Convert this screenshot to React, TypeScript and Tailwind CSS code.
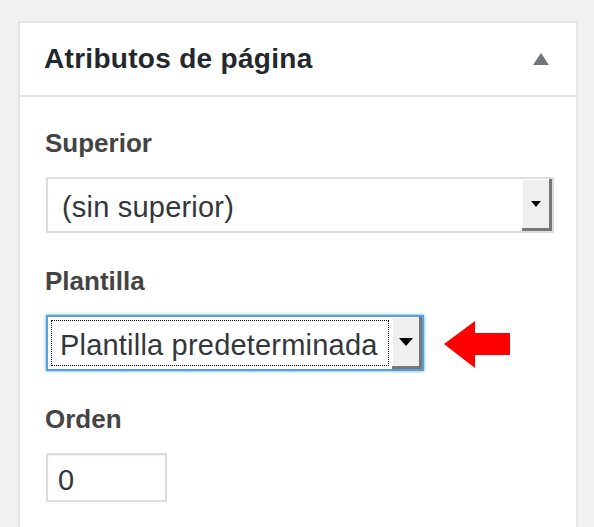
const font = { fontFamily: '"Liberation Sans", Arial, sans-serif' };

const SelectButton = ({ big }: { big?: boolean }) => (
  <div className="w-[30px] h-full bg-[#efefef] shadow-[inset_-3px_-3px_0_#777,inset_1px_1px_0_#fff] flex items-center justify-center pr-[3px] pb-[3px]">
    <div
      className={
        big
          ? "w-0 h-0 border-l-[7px] border-r-[7px] border-t-[8px] border-l-transparent border-r-transparent border-t-black"
          : "w-0 h-0 border-l-[5px] border-r-[5px] border-t-[6px] border-l-transparent border-r-transparent border-t-black"
      }
    />
  </div>
);

const App = () => {
  return (
    <div className="w-[594px] h-[527px] overflow-hidden bg-[#f1f1f1] pt-[21px] pl-[18px]" style={font}>
      <div className="w-[560px] h-[520px] bg-white border-2 border-[#e5e5e5]">
        <div className="h-[74px] border-b-2 border-[#e5e5e5] flex items-center justify-between pl-[24px] pr-[27px]">
          <h2 className="text-[28px] leading-[32px] font-bold tracking-[0.3px] text-[#23282d]">Atributos de página</h2>
          <div className="w-0 h-0 border-l-[8px] border-r-[8px] border-b-[12px] border-l-transparent border-r-transparent border-b-[#72777c]" />
        </div>

        <div className="pl-[26px] pt-[31px]">
          <p className="text-[26px] leading-[30px] font-bold text-[#444] mb-[19px] -ml-[1px]">Superior</p>
          <div className="w-[508px] h-[56px] border-2 border-[#ddd] flex">
            <div className="flex-1 flex items-center pl-[14px] pt-1 text-[29px] leading-[32px] tracking-[0.2px] text-[#32373c]">
              (sin superior)
            </div>
            <SelectButton />
          </div>

          <p className="text-[26px] leading-[30px] font-bold text-[#444] mt-[33px] mb-[19px] -ml-[1px]">Plantilla</p>
          <div className="flex items-center gap-[20px]">
            <div className="w-[378px] h-[56px] border-2 border-[#5b9dd9] shadow-[0_0_3px_rgba(30,140,190,0.8)] flex">
              <div className="flex-1 p-[3px]">
                <div className="h-full border border-dotted border-black flex items-center pl-[8px] pt-1 text-[29px] leading-[32px] tracking-[0.2px] text-[#32373c] whitespace-nowrap overflow-hidden">
                  Plantilla predeterminada
                </div>
              </div>
              <SelectButton big />
            </div>
            <svg width="66" height="47" viewBox="0 0 66 47" className="mt-[2px]">
              <polygon points="0,23 31,0 31,12 66,12 66,34 31,34 31,47" fill="#ff0000" />
            </svg>
          </div>

          <p className="text-[26px] leading-[30px] font-bold text-[#444] mt-[33px] mb-[19px] -ml-[1px]">Orden</p>
          <div className="w-[121px] h-[49px] border-2 border-[#ddd] shadow-[inset_0_1px_2px_rgba(0,0,0,0.07)] flex items-center pl-[10px] pt-1 text-[29px] leading-[32px] text-[#32373c]">
            0
          </div>
        </div>
      </div>
    </div>
  );
};

export default App;
